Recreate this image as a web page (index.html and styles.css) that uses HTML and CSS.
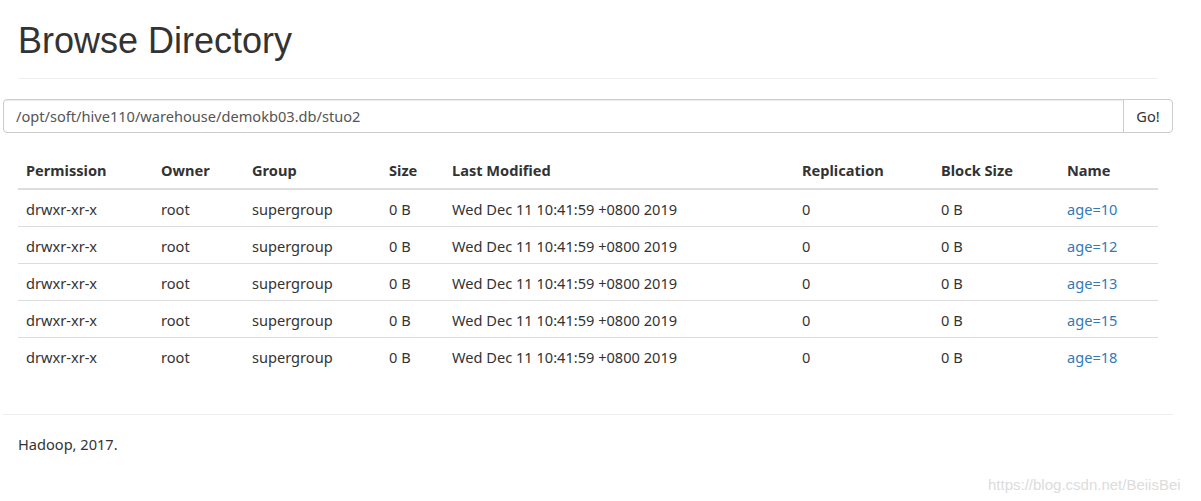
FILE: index.html
```html
<!DOCTYPE html>
<html>
<head>
<meta charset="utf-8">
<title>Browsing HDFS</title>
<link rel="stylesheet" href="styles.css">
</head>
<body>
<div class="container">
  <div class="page-header">
    <h1>Browse Directory</h1>
  </div>
  <form class="path-row">
    <div class="input-group">
      <input class="form-control" type="text" value="/opt/soft/hive110/warehouse/demokb03.db/stuo2">
      <button class="btn" type="button">Go!</button>
    </div>
  </form>
  <table class="table">
    <colgroup>
      <col class="c1"><col class="c2"><col class="c3"><col class="c4"><col class="c5"><col class="c6"><col class="c7"><col class="c8">
    </colgroup>
    <thead>
      <tr><th>Permission</th><th>Owner</th><th>Group</th><th>Size</th><th>Last Modified</th><th>Replication</th><th>Block Size</th><th>Name</th></tr>
    </thead>
    <tbody>
      <tr><td>drwxr-xr-x</td><td>root</td><td>supergroup</td><td>0 B</td><td>Wed Dec 11 10:41:59 +0800 2019</td><td>0</td><td>0 B</td><td><a href="#">age=10</a></td></tr>
      <tr><td>drwxr-xr-x</td><td>root</td><td>supergroup</td><td>0 B</td><td>Wed Dec 11 10:41:59 +0800 2019</td><td>0</td><td>0 B</td><td><a href="#">age=12</a></td></tr>
      <tr><td>drwxr-xr-x</td><td>root</td><td>supergroup</td><td>0 B</td><td>Wed Dec 11 10:41:59 +0800 2019</td><td>0</td><td>0 B</td><td><a href="#">age=13</a></td></tr>
      <tr><td>drwxr-xr-x</td><td>root</td><td>supergroup</td><td>0 B</td><td>Wed Dec 11 10:41:59 +0800 2019</td><td>0</td><td>0 B</td><td><a href="#">age=15</a></td></tr>
      <tr><td>drwxr-xr-x</td><td>root</td><td>supergroup</td><td>0 B</td><td>Wed Dec 11 10:41:59 +0800 2019</td><td>0</td><td>0 B</td><td><a href="#">age=18</a></td></tr>
    </tbody>
  </table>
  <div class="footer">
    <p>Hadoop, 2017.</p>
  </div>
</div>
<div class="watermark">https://blog.csdn.net/BeiisBei</div>
</body>
</html>
```
FILE: styles.css
```css
* { box-sizing: border-box; }
html, body { margin: 0; padding: 0; background: #fff; }
body {
  font-family: "Noto Sans", "Open Sans", sans-serif;
  font-size: 14.6px;
  line-height: 20px;
  color: #333;
  width: 1201px;
  height: 501px;
  overflow: hidden;
  position: relative;
}
.container {
  width: 1140px;
  margin-left: 18px;
}
.page-header {
  padding-bottom: 16px;
  border-bottom: 1px solid #eee;
  margin: 0 0 20px;
  padding-top: 19px;
}
.page-header h1 {
  margin: 0;
  font-family: "Liberation Sans", Arial, sans-serif;
  font-weight: 400;
  font-size: 36px;
  line-height: 43px;
  color: #333;
}
.path-row {
  margin: 0 -15px 0 -15px;
}
.input-group {
  display: flex;
  height: 34px;
}
.form-control {
  flex: 1;
  height: 34px;
  padding: 6px 12px;
  font-family: inherit;
  font-size: 14.6px;
  color: #555;
  border: 1px solid #ccc;
  border-radius: 4px 0 0 4px;
  box-shadow: inset 0 1px 1px rgba(0,0,0,.075);
  outline: none;
}
.btn {
  width: 50px;
  height: 34px;
  margin-left: -1px;
  padding: 6px 0;
  font-family: inherit;
  font-size: 14.6px;
  color: #333;
  background: #fff;
  border: 1px solid #ccc;
  border-radius: 0 4px 4px 0;
}
.table {
  width: 1140px;
  table-layout: fixed;
  border-collapse: collapse;
  margin-top: 19px;
}
.c1 { width: 135px; } .c2 { width: 91px; } .c3 { width: 137px; } .c4 { width: 63px; }
.c5 { width: 350px; } .c6 { width: 139px; } .c7 { width: 126px; } .c8 { width: 99px; }
.table th, .table td {
  padding: 8px;
  text-align: left;
  vertical-align: top;
  white-space: nowrap;
}
.table th {
  font-weight: 700;
  border-bottom: 2px solid #ddd;
}
.table tbody td {
  padding-top: 9px;
  padding-bottom: 7px;
}
.table tbody tr + tr td {
  border-top: 1px solid #ddd;
}
.table a { color: #337ab7; text-decoration: none; }
.footer {
  margin: 40px -15px 0;
  border-top: 1px solid #eee;
  padding: 19px 15px;
}
.footer p { margin: 0; }
.watermark {
  position: absolute;
  left: 988px;
  top: 475px;
  font-family: "Liberation Sans", Arial, sans-serif;
  font-size: 15px;
  line-height: 20px;
  color: #dcdcdc;
}
```
